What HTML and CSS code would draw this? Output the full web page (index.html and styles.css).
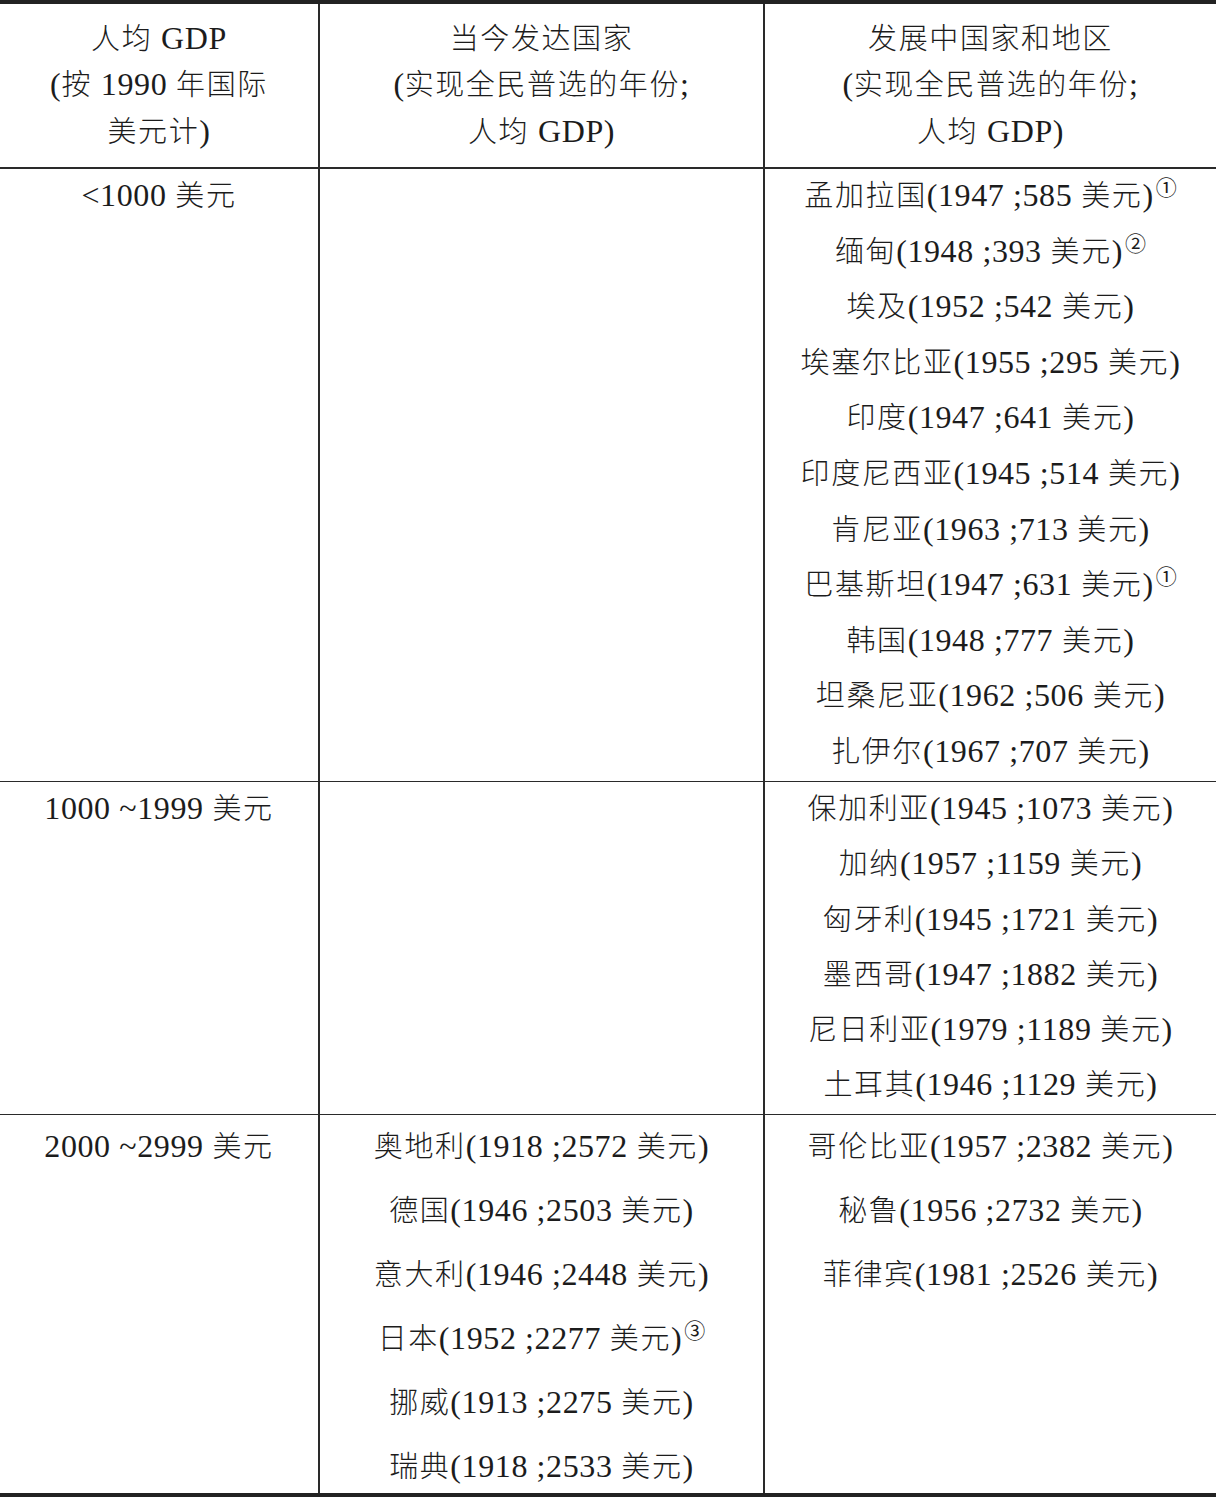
FILE: index.html
```html
<!DOCTYPE html>
<html lang="zh">
<head>
<meta charset="utf-8">
<link rel="stylesheet" href="styles.css">
</head>
<body>
<table class="gdp">
  <colgroup>
    <col class="c1"><col class="c2"><col class="c3">
  </colgroup>
  <thead>
    <tr>
      <th><div>人均 <span class="n">GDP</span></div><div><span class="n">(</span>按 <span class="n">1990</span> 年国际</div><div>美元计<span class="n">)</span></div></th>
      <th><div>当今发达国家</div><div><span class="n">(</span>实现全民普选的年份<span class="n">;</span></div><div>人均 <span class="n">GDP)</span></div></th>
      <th><div>发展中国家和地区</div><div><span class="n">(</span>实现全民普选的年份<span class="n">;</span></div><div>人均 <span class="n">GDP)</span></div></th>
    </tr>
  </thead>
  <tbody>
    <tr class="r1">
      <td><div><span class="n">&lt;1000</span> 美元</div></td>
      <td></td>
      <td>
        <div>孟加拉国<span class="n">(1947 ;585</span> 美元<span class="n">)</span><sup>①</sup></div>
        <div>缅甸<span class="n">(1948 ;393</span> 美元<span class="n">)</span><sup>②</sup></div>
        <div>埃及<span class="n">(1952 ;542</span> 美元<span class="n">)</span></div>
        <div>埃塞尔比亚<span class="n">(1955 ;295</span> 美元<span class="n">)</span></div>
        <div>印度<span class="n">(1947 ;641</span> 美元<span class="n">)</span></div>
        <div>印度尼西亚<span class="n">(1945 ;514</span> 美元<span class="n">)</span></div>
        <div>肯尼亚<span class="n">(1963 ;713</span> 美元<span class="n">)</span></div>
        <div>巴基斯坦<span class="n">(1947 ;631</span> 美元<span class="n">)</span><sup>①</sup></div>
        <div>韩国<span class="n">(1948 ;777</span> 美元<span class="n">)</span></div>
        <div>坦桑尼亚<span class="n">(1962 ;506</span> 美元<span class="n">)</span></div>
        <div>扎伊尔<span class="n">(1967 ;707</span> 美元<span class="n">)</span></div>
      </td>
    </tr>
    <tr class="r2">
      <td><div><span class="n">1000 ~1999</span> 美元</div></td>
      <td></td>
      <td>
        <div>保加利亚<span class="n">(1945 ;1073</span> 美元<span class="n">)</span></div>
        <div>加纳<span class="n">(1957 ;1159</span> 美元<span class="n">)</span></div>
        <div>匈牙利<span class="n">(1945 ;1721</span> 美元<span class="n">)</span></div>
        <div>墨西哥<span class="n">(1947 ;1882</span> 美元<span class="n">)</span></div>
        <div>尼日利亚<span class="n">(1979 ;1189</span> 美元<span class="n">)</span></div>
        <div>土耳其<span class="n">(1946 ;1129</span> 美元<span class="n">)</span></div>
      </td>
    </tr>
    <tr class="r3">
      <td><div><span class="n">2000 ~2999</span> 美元</div></td>
      <td>
        <div>奥地利<span class="n">(1918 ;2572</span> 美元<span class="n">)</span></div>
        <div>德国<span class="n">(1946 ;2503</span> 美元<span class="n">)</span></div>
        <div>意大利<span class="n">(1946 ;2448</span> 美元<span class="n">)</span></div>
        <div>日本<span class="n">(1952 ;2277</span> 美元<span class="n">)</span><sup>③</sup></div>
        <div>挪威<span class="n">(1913 ;2275</span> 美元<span class="n">)</span></div>
        <div>瑞典<span class="n">(1918 ;2533</span> 美元<span class="n">)</span></div>
      </td>
      <td>
        <div>哥伦比亚<span class="n">(1957 ;2382</span> 美元<span class="n">)</span></div>
        <div>秘鲁<span class="n">(1956 ;2732</span> 美元<span class="n">)</span></div>
        <div>菲律宾<span class="n">(1981 ;2526</span> 美元<span class="n">)</span></div>
      </td>
    </tr>
  </tbody>
</table>
</body>
</html>
```
FILE: styles.css
```css
html, body {
  margin: 0;
  padding: 0;
  background: #ffffff;
}

body {
  font-family: "Liberation Serif", "Noto Sans CJK SC", serif;
  font-size: 29px;
  font-weight: 300;
  letter-spacing: 1.6px;
  color: #1c1c1c;
}

.gdp {
  width: 1216px;
  border-collapse: collapse;
  table-layout: fixed;
  border-top: 4px solid #222;
  border-bottom: 4px solid #222;
}

.c1 { width: 319px; }
.c2 { width: 445px; }
.c3 { width: 452px; }

.gdp th,
.gdp td {
  padding: 0;
  text-align: center;
  white-space: nowrap;
  border-left: 2px solid #2a2a2a;
}

.gdp th:first-child,
.gdp td:first-child {
  border-left: none;
}

.gdp th {
  font-weight: 300;
  vertical-align: middle;
  height: 163px;
  line-height: 46.5px;
  border-bottom: 2px solid #2a2a2a;
}

.gdp td {
  vertical-align: top;
  border-bottom: 1.5px solid #2a2a2a;
}

.n {
  font-size: 32px;
  font-weight: 400;
  letter-spacing: 0.6px;
  line-height: 1;
}

.r1 td {
  line-height: 55.6px;
  height: 612px;
}

.r2 td {
  line-height: 55.3px;
  height: 331px;
}

.r3 td {
  line-height: 64px;
  height: 378px;
  border-bottom: none;
}

.r3 td div:last-child {
  margin-bottom: -8px;
}

.gdp sup {
  font-size: 21px;
  font-weight: 400;
  letter-spacing: 0;
  line-height: 0;
  vertical-align: 11px;
  margin-left: 2px;
}
```
